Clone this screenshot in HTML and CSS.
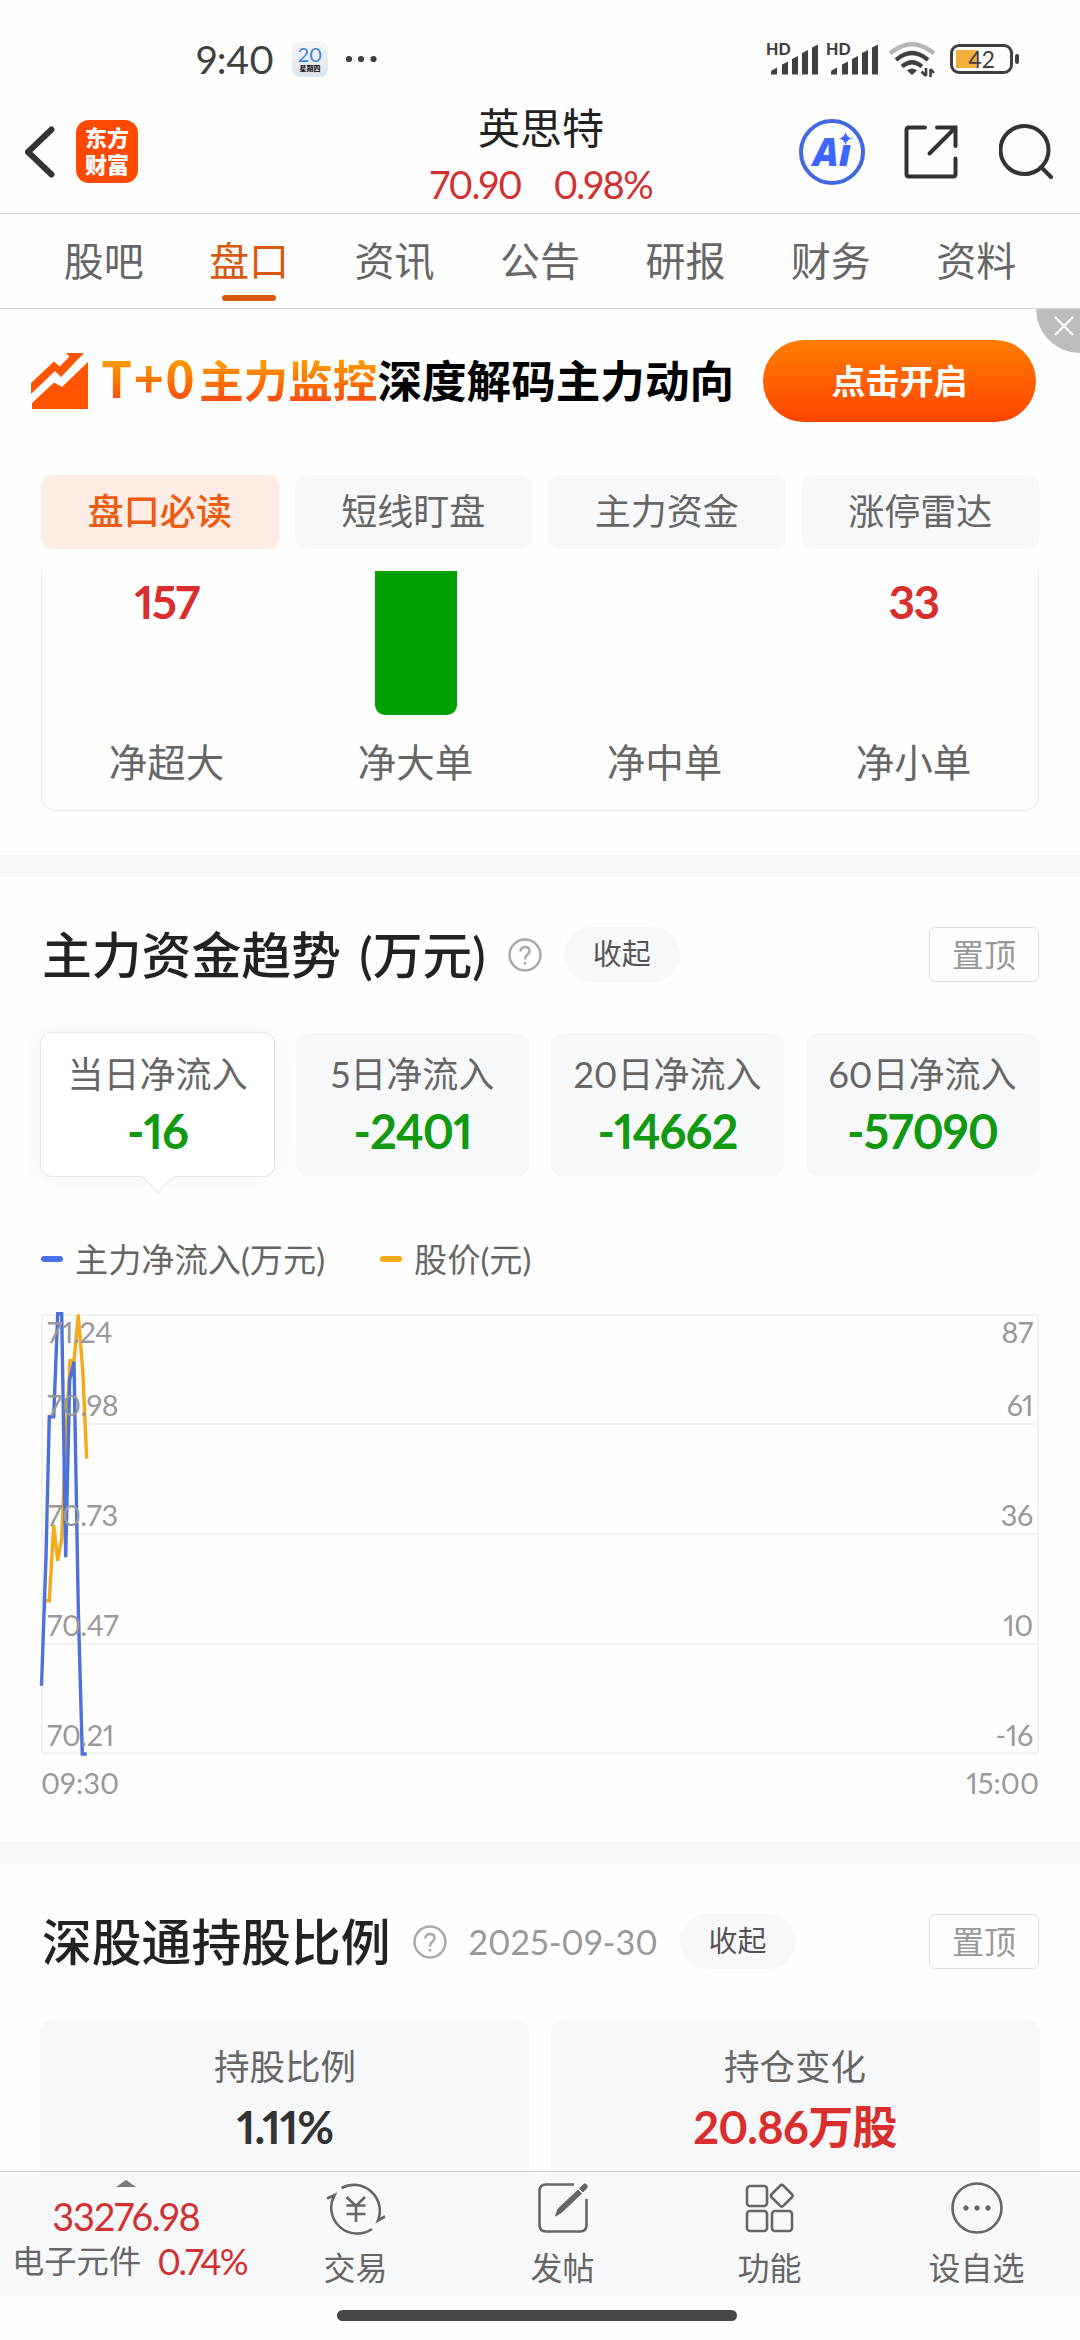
FILE: index.html
```
<!DOCTYPE html>
<html lang="zh-CN">
<head>
  <meta charset="UTF-8" />
  <meta name="viewport" content="width=device-width, initial-scale=1.0"/>
  <title>英思特 盘口</title>
  <link rel="stylesheet" href="styles.css">
</head>
<body>
  <div class="status-bar">
    <span class="time">9:40</span>
    <div class="date-icon"><b>20</b><i>星期四</i></div>
    <svg class="dots" width="32" height="10" viewBox="0 0 32 10"><circle cx="4" cy="5" r="3.1"/><circle cx="16" cy="5" r="3.1"/><circle cx="28.500" cy="5" r="3.1"/></svg>
    <div class="signal">
      <span>HD</span>
      <svg width="52" height="34" viewBox="0 0 52 34"><path d="M3 32.500V30Q3 28.500 4.500 28L9 25.500V32.500ZM14 32.500V22.500L20 19.500V32.500ZM24 32.500V17L30 14V32.500ZM34 32.500V11L40 8V32.500ZM44 32.500V5.500L50 2.500V32.500Z"/></svg>
    </div>
    <div class="signal">
      <span>HD</span>
      <svg width="52" height="34" viewBox="0 0 52 34"><path d="M3 32.500V30Q3 28.500 4.500 28L9 25.500V32.500ZM14 32.500V22.500L20 19.500V32.500ZM24 32.500V17L30 14V32.500ZM34 32.500V11L40 8V32.500ZM44 32.500V5.500L50 2.500V32.500Z"/></svg>
    </div>
    <svg class="wifi" width="48" height="36" viewBox="0 0 48 36" fill="none" stroke-width="4.200">
      <path d="M2 12.500Q24 -6 46 12.500" stroke="#b5b5b5"/>
      <path d="M8 19Q24 5 40 19M14 25.500Q24 17 34 25.500" stroke="#404040"/>
      <path d="M24 34L19 29.500Q24 25.500 29 29.500Z" fill="#404040"/>
      <path d="M38 27V35M38 35L33.500 30.500M42.500 36V28M42.500 28L46 32" stroke="#404040" stroke-width="2.600"/>
    </svg>
    <div class="battery"><span>42</span></div>
  </div>

  <header class="header">
    <svg class="back" width="30" height="52" viewBox="0 0 30 52"><path d="M26.500 3.500L3 26L26.500 48.500"/></svg>
    <div class="logo">东方<br>财富</div>
    <div class="stock">
      <h1>英思特</h1>
      <p><span>70.90</span><span>0.98%</span></p>
    </div>
    <div class="ai">
      <span>Ai</span>
      <svg width="13" height="13" viewBox="0 0 12 12"><path d="M6 0Q7 5 12 6Q7 7 6 12Q5 7 0 6Q5 5 6 0Z"/></svg>
    </div>
    <svg class="share" width="54" height="54" viewBox="0 0 54 54"><path d="M21 2.500H5Q2.500 2.500 2.500 5V49Q2.500 51.500 5 51.500H49Q51.500 51.500 51.500 49V33.500M33 2.500H51.500V21M51 3L25.500 28.500"/></svg>
    <svg class="search" width="54" height="56" viewBox="0 0 54 56"><circle cx="25.500" cy="26" r="24"/><path d="M42 43L52 53"/></svg>
  </header>

  <nav class="tabs">
    <a>股吧</a>
    <a class="active">盘口</a>
    <a>资讯</a>
    <a>公告</a>
    <a>研报</a>
    <a>财务</a>
    <a>资料</a>
  </nav>

  <div class="banner">
    <svg width="58" height="58" viewBox="0 0 58 58"><path d="M0 31L23 9.500L28.500 14.500L38 5L35.500 1H53L30 25L24 19L0 42ZM1 51L23 30.500L31 35L57 10V57H1Z"/></svg>
    <p><em><small>T+0</small>主力监控</em>深度解码主力动向</p>
    <button class="open-btn">点击开启</button>
    <div class="close"><svg width="20" height="20" viewBox="0 0 20 20"><path d="M1 1L19 19M19 1L1 19"/></svg></div>
  </div>

  <div class="chips">
    <span class="active">盘口必读</span>
    <span>短线盯盘</span>
    <span>主力资金</span>
    <span>涨停雷达</span>
  </div>

  <div class="orders">
    <div><b>157</b><span>净超大</span></div>
    <div><i></i><span>净大单</span></div>
    <div><span>净中单</span></div>
    <div><b>33</b><span>净小单</span></div>
  </div>

  <section class="trend">
    <div class="title">
      <h2>主力资金趋势 (万元)</h2>
      <svg class="help" width="34" height="34" viewBox="0 0 34 34"><circle cx="17" cy="17" r="15.500"/><path d="M12.500 13.500Q12.500 9 17 9Q21.500 9 21.500 13Q21.500 15 19 17Q17 18.500 17 21.500M17 24V26.500"/></svg>
      <span class="fold">收起</span>
      <span class="pin">置顶</span>
    </div>
    <div class="flows">
      <div class="current">当日净流入<b>-16</b></div>
      <div>5日净流入<b>-2401</b></div>
      <div>20日净流入<b>-14662</b></div>
      <div>60日净流入<b>-57090</b></div>
    </div>
    <div class="legend">
      <span class="blue">主力净流入(万元)</span>
      <span class="orange">股价(元)</span>
    </div>
    <svg class="chart" width="998" height="446" viewBox="0 0 998 446">
      <path class="grid" d="M1 4H997V442H1ZM0 113H998M0 223H998M0 333H998"/>
      <polyline class="price" points="4.300,289.700 8.300,289.700 12.700,214 16.700,249.700 20.700,227.300 24.700,129 29,49.700 33,49.700 37.300,3.700 41.700,59 45.700,147.700"/>
      <polyline class="flow" points="0.500,374.700 5,245.700 8.300,105.700 12.700,105.700 16.700,2.700 20.700,2.700 24.700,246.300 28.700,69 33,50.700 37.300,299 41.300,443 45.700,443"/>
      <g>
        <text x="6" y="32">71.24</text>
        <text x="6" y="105">70.98</text>
        <text x="6" y="215">70.73</text>
        <text x="6" y="325">70.47</text>
        <text x="6" y="435">70.21</text>
      </g>
      <g text-anchor="end">
        <text x="992" y="32">87</text>
        <text x="992" y="105">61</text>
        <text x="992" y="215">36</text>
        <text x="992" y="325">10</text>
        <text x="992" y="435">-16</text>
      </g>
    </svg>
    <div class="axis"><span>09:30</span><span>15:00</span></div>
  </section>

  <section class="holding">
    <div class="title">
      <h2>深股通持股比例</h2>
      <svg class="help" width="34" height="34" viewBox="0 0 34 34"><circle cx="17" cy="17" r="15.500"/><path d="M12.500 13.500Q12.500 9 17 9Q21.500 9 21.500 13Q21.500 15 19 17Q17 18.500 17 21.500M17 24V26.500"/></svg>
      <time>2025-09-30</time>
      <span class="fold">收起</span>
      <span class="pin">置顶</span>
    </div>
    <div class="ratios">
      <div>持股比例<b class="ratio">1.11%</b></div>
      <div>持仓变化<b class="red">20.86万股</b></div>
    </div>
  </section>

  <footer class="toolbar">
    <div class="index">
      <svg width="20" height="7" viewBox="0 0 20 7"><path d="M0 7L10 0L20 7Z"/></svg>
      <b>33276.98</b>
      <p>电子元件<span>0.74%</span></p>
    </div>
    <div class="tool">
      <svg width="60" height="54" viewBox="0 0 60 54"><path d="M15.500 7A26 26 0 0 1 52 39.500L59 35.500M46 48A26 26 0 0 1 8.500 14L1 17.500M20.500 16L30 25L39 16M30 25V41M20.500 24.500H39.500M20.500 33H39.500"/></svg>
      交易
    </div>
    <div class="tool">
      <svg width="52" height="54" viewBox="0 0 52 54"><path d="M37 3.500H9Q2.500 3.500 2.500 10V44Q2.500 50.500 9 50.500H43Q49.500 50.500 49.500 44V18"/><path class="solid" d="M18.500 35L21 28L41 9L44.500 12.500L24.500 31.500ZM42.500 7.500L46 4Q48 2 49.500 3.500Q51 5.500 49.500 7.500L46 11Z"/></svg>
      发帖
    </div>
    <div class="tool">
      <svg width="50" height="54" viewBox="0 0 50 54"><rect x="2" y="5" width="20" height="20" rx="3"/><rect x="2" y="30" width="20" height="20" rx="3"/><rect x="27" y="30" width="20" height="20" rx="3"/><rect x="28.500" y="6.500" width="16.500" height="16.500" rx="2.500" transform="rotate(45 36.750 14.750)"/></svg>
      功能
    </div>
    <div class="tool">
      <svg width="54" height="54" viewBox="0 0 54 54"><circle cx="27" cy="27" r="24.500"/><g class="solid"><circle cx="16" cy="27" r="2.200"/><circle cx="27" cy="27" r="2.200"/><circle cx="38" cy="27" r="2.200"/></g></svg>
      设自选
    </div>
  </footer>
  <div class="home-bar"></div>
</body>
</html>
```
FILE: styles.css
```
* { box-sizing: border-box; margin: 0; padding: 0; }
body { width: 1080px; height: 2340px; overflow: hidden; background: #fefefe; color: #666; font-family: Lato, "Noto Sans CJK SC", sans-serif; font-variant-numeric: proportional-nums; }
h1, h2, em, i { font-weight: normal; font-style: normal; }
svg { flex: none; }

.status-bar { display: flex; align-items: center; height: 92px; padding: 26px 50px 0 196px; color: #404040; }
.time { width: 78px; font-size: 39px; line-height: 60px; letter-spacing: -0.5px; }
.date-icon { flex: none; width: 36px; height: 36px; margin-left: 18px; border-radius: 8px; background: linear-gradient(#f5f8fa, #dce5ec); text-align: center; }
.date-icon b { display: block; padding-top: 3px; font-size: 20px; line-height: 20px; font-weight: normal; color: #4280d9; }
.date-icon i { display: block; font-size: 7px; line-height: 8px; font-weight: 900; color: #222; }
.dots { margin-left: 17px; margin-right: auto; fill: #404040; }
.signal { position: relative; flex: none; width: 60px; height: 34px; padding-left: 2px; }
.signal span { position: absolute; left: 0; top: 0; font-size: 16px; line-height: 14px; font-weight: 900; }
.signal svg { fill: #404040; }
.wifi { margin-left: 2px; }
.battery { position: relative; flex: none; width: 63px; height: 30px; margin: 0 17px 0 14px; border: 3px solid #404040; border-radius: 9px; background: linear-gradient(90deg, #f4ae3a 22px, transparent 22px) no-repeat 3px 3px / 48px 18px; text-align: center; font-size: 23px; line-height: 24px; }
.battery::after { content: ""; position: absolute; right: -9px; top: 7px; width: 4px; height: 10px; border-radius: 2px; background: #404040; }

.header { display: flex; align-items: center; height: 122px; padding: 0 27px 2px 25px; border-bottom: 1px solid #d6d6d6; }
.header svg { fill: none; stroke: #333; stroke-width: 4; stroke-linecap: round; }
.header .back { stroke-width: 6; }
.logo { width: 62px; height: 63px; margin-left: 21px; border-radius: 13px; background: #ff4800; color: #fff; font-size: 22px; line-height: 27px; font-weight: 900; text-align: center; padding-top: 4px; }
.stock { width: 300px; margin-left: 253px; padding-top: 8px; text-align: center; }
.stock h1 { font-size: 42px; line-height: 56px; color: #222; }
.stock p { display: flex; justify-content: center; gap: 32px; font-size: 38px; line-height: 56px; letter-spacing: -1.5px; color: #d03232; }
.ai { position: relative; width: 66px; height: 66px; margin-left: 108px; border: 4px solid #4168e0; border-radius: 50%; }
.ai span { display: block; font: italic 800 38px/56px "Open Sans", sans-serif; color: #3b66ff; text-align: center; }
.header .ai svg { position: absolute; right: 9px; top: 9px; background: #fefefe; fill: #3b66ff; stroke: none; }
.share { margin-left: 39px; }
.search { margin-left: 41px; }

.tabs { display: flex; height: 95px; padding: 0 31px; border-bottom: 1px solid #d6d6d6; }
.tabs a { position: relative; flex: 1; text-align: center; font-size: 40px; line-height: 94px; color: #666; }
.tabs .active { color: #d9590f; }
.tabs .active::after { content: ""; position: absolute; left: 50%; bottom: 7px; width: 54px; height: 6px; margin-left: -27px; border-radius: 3px; background: #d9590f; }

.banner { position: relative; display: flex; align-items: center; height: 166px; padding: 0 44px 22px 31px; }
.banner svg { fill: #ff5500; }
.banner p { width: 636px; margin: -5px 0 0 12px; font-size: 44.6px; line-height: 60px; font-weight: bold; color: #000; white-space: nowrap; }
.banner em { font-weight: bold; background: linear-gradient(#ff9a00 15%, #ff7a00 45%, #f95010 85%); -webkit-background-clip: text; color: transparent; }
.banner small { display: inline-block; width: 98px; font-family: "Noto Sans CJK SC"; font-size: 50px; letter-spacing: 1.8px; }
.open-btn { width: 273px; height: 82px; margin-left: 26px; border: none; border-radius: 41px; background: linear-gradient(#ff7d00, #ff4400); color: #fff; font: bold 34px/80px Lato, "Noto Sans CJK SC", sans-serif; }
.close { position: absolute; right: 0; top: 0; width: 44px; height: 44px; padding: 7px 0 0 18px; border-radius: 0 0 0 44px; background: #bdbdbd; line-height: 0; }
.close svg { fill: none; stroke: #fff; stroke-width: 2; }

.chips { display: grid; grid-template-columns: repeat(4, 1fr); gap: 16px; padding: 0 41px; }
.chips span { height: 74px; border-radius: 11px; background: #f7f8fa; text-align: center; font-size: 36px; line-height: 73px; }
.chips .active { background: #ffede5; color: #ec5b12; font-weight: 500; }

.orders { display: grid; grid-template-columns: repeat(4, 1fr); height: 240px; margin: 22px 41px 44px; border: 1px solid #e8e8e8; border-top: none; border-radius: 0 0 15px 15px; }
.orders div { display: flex; flex-direction: column; align-items: center; text-align: center; }
.orders b { font-size: 46px; line-height: 62px; letter-spacing: -1.6px; color: #d92e2e; }
.orders i { width: 82px; height: 144px; border-radius: 0 0 10px 10px; background: #00a000; }
.orders span { margin-top: auto; margin-bottom: 22px; font-size: 38.5px; line-height: 52px; }

.trend, .holding { border-top: 22px solid #f7f8fa; padding: 50px 41px 0; }
.trend { height: 987px; }
.title { display: flex; align-items: center; height: 55px; padding-left: 1px; }
h2 { font-size: 49.8px; line-height: 58px; font-weight: 500; color: #222; white-space: pre; word-spacing: 6px; }
.help { margin-left: 22px; fill: none; stroke: #aaa; stroke-width: 2.5; }
.fold { width: 116px; height: 55px; margin-left: 22px; border-radius: 28px; background: #f7f8fa; text-align: center; font-size: 29px; line-height: 54px; color: #555; }
.pin { width: 110px; height: 55px; margin-left: auto; border: 1px solid #ddd; border-radius: 6px; text-align: center; font-size: 32px; line-height: 53px; color: #999; }
.flows { display: grid; grid-template-columns: repeat(4, 1fr); gap: 22px; margin-top: 51px; }
.flows div { position: relative; height: 143px; padding-top: 18px; border-radius: 11px; background: #f7f8fa; text-align: center; font-size: 36px; line-height: 46px; }
.flows b { display: block; font-size: 47px; line-height: 68px; letter-spacing: -1px; color: #129912; }
.flows .current { background: #fff; box-shadow: 0 0 0 1px #e6e6e6, 0 0 24px rgba(0,0,0,0.06); }
.flows .current::after { content: ""; position: absolute; left: 50%; bottom: -12px; width: 23px; height: 23px; margin-left: -12px; border: solid #e6e6e6; border-width: 0 1px 1px 0; background: #fff; transform: rotate(45deg); }
.legend { display: flex; gap: 55px; height: 50px; margin-top: 58px; font-size: 33.2px; line-height: 50px; }
.legend span { display: flex; align-items: center; gap: 12px; }
.legend span::before { content: ""; width: 22px; height: 6px; border-radius: 3px; background: #4a72e8; }
.legend .orange::before { background: #f8a810; }
.chart { display: block; margin-top: 27px; overflow: visible; }
.chart .grid { fill: none; stroke: #f1f1f1; stroke-width: 2; }
.chart polyline { fill: none; stroke-width: 3.4; }
.chart .price { stroke: #f4aa1a; }
.chart .flow { stroke: #4a72da; }
.chart text { font-size: 28.8px; letter-spacing: -0.3px; fill: #999; }
.axis { display: flex; justify-content: space-between; margin-top: 6px; font-size: 29px; line-height: 40px; color: #999; }

.holding { height: 329px; overflow: hidden; }
.holding time { width: 188px; margin-left: 22px; font-size: 34.3px; line-height: 50px; color: #999; white-space: nowrap; }
.holding .fold { margin-left: 23px; }
.ratios { display: grid; grid-template-columns: 1fr 1fr; gap: 22px; margin-top: 51px; }
.ratios div { height: 170px; padding-top: 23px; border-radius: 11px; background: #f7f8fa; text-align: center; font-size: 35.5px; line-height: 48px; }
.ratios b { display: block; margin-top: 3px; font-size: 45px; line-height: 66px; font-weight: bold; letter-spacing: -0.7px; color: #333; }
.ratios .ratio { letter-spacing: -1px; }
.ratios .red { color: #d92e2e; }

.toolbar { display: flex; height: 125px; border-top: 1px solid #d4d4d4; background: #f7f8fa; }
.index { width: 252px; padding-top: 8px; text-align: center; line-height: 0; }
.index svg { fill: #77777c; }
.index b { display: block; margin-top: 6px; font-size: 38px; line-height: 46px; font-weight: normal; letter-spacing: -1.2px; color: #d03232; }
.index p { display: flex; gap: 16px; padding-left: 12px; font-size: 32.3px; line-height: 44px; white-space: nowrap; }
.index span { font-size: 36px; letter-spacing: -2px; color: #d03232; }
.tool { flex: 1; display: flex; flex-direction: column; align-items: center; padding-top: 9px; font-size: 32px; line-height: 65px; }
.tool svg { fill: none; stroke: #666; stroke-width: 2.6; }
.tool .solid { fill: #666; stroke-width: 1; }
.home-bar { width: 400px; height: 11px; margin: 14px 0 0 337px; border-radius: 6px; background: #474747; }
```
